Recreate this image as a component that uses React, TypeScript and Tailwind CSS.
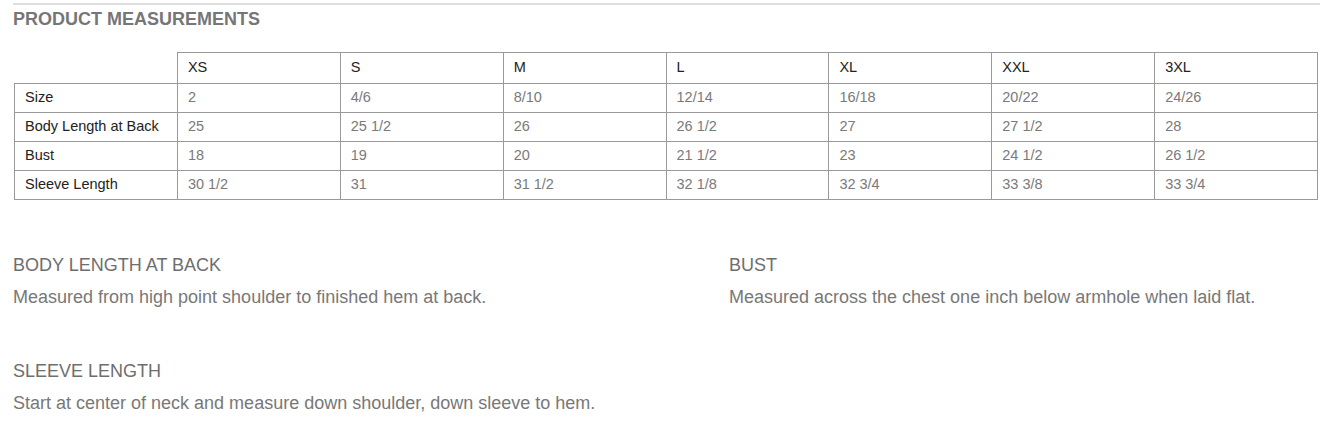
const sizes = ['XS', 'S', 'M', 'L', 'XL', 'XXL', '3XL']

const rows = [
  { label: 'Size', values: ['2', '4/6', '8/10', '12/14', '16/18', '20/22', '24/26'] },
  { label: 'Body Length at Back', values: ['25', '25 1/2', '26', '26 1/2', '27', '27 1/2', '28'] },
  { label: 'Bust', values: ['18', '19', '20', '21 1/2', '23', '24 1/2', '26 1/2'] },
  { label: 'Sleeve Length', values: ['30 1/2', '31', '31 1/2', '32 1/8', '32 3/4', '33 3/8', '33 3/4'] },
]

const notes = [
  { title: 'BODY LENGTH AT BACK', text: 'Measured from high point shoulder to finished hem at back.' },
  { title: 'BUST', text: 'Measured across the chest one inch below armhole when laid flat.' },
  { title: 'SLEEVE LENGTH', text: 'Start at center of neck and measure down shoulder, down sleeve to hem.' },
]

export default function App() {
  return (
    <div className="min-h-screen bg-white font-['Liberation_Sans',Arial,sans-serif] pt-[3px] pl-[13px]">
      <div className="h-[2px] bg-[#dedede]" />
      <h2 className="mt-[3px] text-[18px] leading-[22px] font-bold text-[#767676]">PRODUCT MEASUREMENTS</h2>

      <table className="mt-[22px] ml-px w-[1304px] table-fixed border-collapse text-[14.5px]">
        <thead>
          <tr className="h-[31px]">
            <th className="border-b border-[#9a9a9a]" />
            {sizes.map((s) => (
              <th key={s} className="border border-[#9a9a9a] px-[10px] text-left font-normal text-[#222]">
                {s}
              </th>
            ))}
          </tr>
        </thead>
        <tbody>
          {rows.map((r) => (
            <tr key={r.label} className="h-[29px]">
              <td className="border border-[#9a9a9a] px-[10px] text-[#222]">{r.label}</td>
              {r.values.map((v, i) => (
                <td key={i} className="border border-[#9a9a9a] px-[10px] text-[#7a7a7a]">
                  {v}
                </td>
              ))}
            </tr>
          ))}
        </tbody>
      </table>

      <div className="mt-[54px] grid grid-cols-[716px_1fr] gap-y-[52px] text-[#787878]">
        {notes.map((n) => (
          <div key={n.title}>
            <div className="text-[18px] leading-[22px] text-[#6e6e6e]">{n.title}</div>
            <p className="mt-[10px] text-[18px] leading-[22px]">{n.text}</p>
          </div>
        ))}
      </div>
    </div>
  )
}
